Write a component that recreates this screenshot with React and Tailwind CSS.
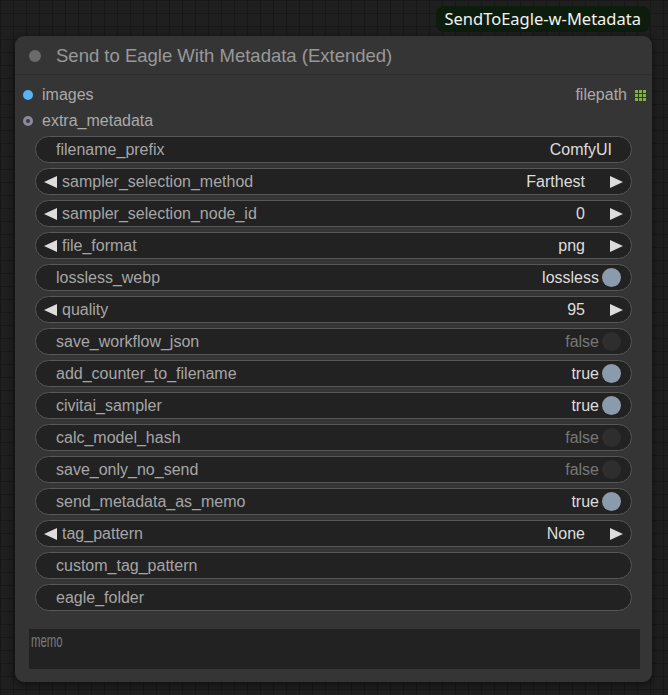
const widgets = [
  { name: 'filename_prefix', kind: 'text', value: 'ComfyUI' },
  { name: 'sampler_selection_method', kind: 'combo', value: 'Farthest' },
  { name: 'sampler_selection_node_id', kind: 'combo', value: '0' },
  { name: 'file_format', kind: 'combo', value: 'png' },
  { name: 'lossless_webp', kind: 'toggle', value: 'lossless', on: true },
  { name: 'quality', kind: 'combo', value: '95' },
  { name: 'save_workflow_json', kind: 'toggle', value: 'false', on: false },
  { name: 'add_counter_to_filename', kind: 'toggle', value: 'true', on: true },
  { name: 'civitai_sampler', kind: 'toggle', value: 'true', on: true },
  { name: 'calc_model_hash', kind: 'toggle', value: 'false', on: false },
  { name: 'save_only_no_send', kind: 'toggle', value: 'false', on: false },
  { name: 'send_metadata_as_memo', kind: 'toggle', value: 'true', on: true },
  { name: 'tag_pattern', kind: 'combo', value: 'None' },
  { name: 'custom_tag_pattern', kind: 'text', value: '' },
  { name: 'eagle_folder', kind: 'text', value: '' },
];

function Arrow({ dir }) {
  return (
    <svg width="13" height="12" viewBox="0 0 13 12" className="shrink-0">
      {dir === 'left'
        ? <polygon points="13,0 13,12 0,6" fill="#dddddd" />
        : <polygon points="0,0 0,12 13,6" fill="#dddddd" />}
    </svg>
  );
}

function WidgetRow({ w }) {
  if (w.kind === 'combo') {
    return (
      <div className="flex h-[27px] items-center rounded-full border border-[#575757] bg-[#222222] pl-[8px] pr-[8px]">
        <Arrow dir="left" />
        <span className="ml-[5px] text-[#a6a6a6]">{w.name}</span>
        <span className="ml-auto mr-[25px] text-[#dddddd]">{w.value}</span>
        <Arrow dir="right" />
      </div>
    );
  }
  if (w.kind === 'toggle') {
    return (
      <div className="flex h-[27px] items-center rounded-full border border-[#575757] bg-[#222222] pl-[20px] pr-[10px]">
        <span className="text-[#a6a6a6]">{w.name}</span>
        <span className={w.on ? 'ml-auto mr-[3px] text-[#dddddd]' : 'ml-auto mr-[3px] text-[#777777]'}>{w.value}</span>
        <span className={w.on ? 'h-[19px] w-[19px] rounded-full bg-[#8a9bad]' : 'h-[19px] w-[19px] rounded-full bg-[#2e2e2e]'} />
      </div>
    );
  }
  return (
    <div className="flex h-[27px] items-center rounded-full border border-[#575757] bg-[#222222] pl-[20px] pr-[19px]">
      <span className="text-[#a6a6a6]">{w.name}</span>
      <span className="ml-auto text-[#dddddd]">{w.value}</span>
    </div>
  );
}

export default function App() {
  return (
    <div className="flex h-[695px] w-[668px] flex-col overflow-hidden bg-[#1f1f1f] bg-[linear-gradient(to_right,#181818_1px,transparent_1px),linear-gradient(to_bottom,#181818_1px,transparent_1px)] bg-[size:13px_13px] pt-[6px] font-['Liberation_Sans',Arial,sans-serif] text-[16px]">
      <div className="ml-auto mr-[18px] flex h-[26px] items-center rounded-[8px] bg-[#0c1d0e] pl-[8px] pr-[9px] font-['Noto_Sans',sans-serif] text-[16.5px] text-[#f2f2f2]">
        SendToEagle-w-Metadata
      </div>

      <div className="ml-[15px] mt-[4px] flex h-[646px] w-[637px] flex-col rounded-[9px] bg-[#353535] shadow-[0_2px_8px_rgba(0,0,0,0.6)]">
        <div className="flex h-[39px] items-center border-b border-[#2c2c2c] pl-[14px] pt-[1px] text-[18.5px] text-[#999999]">
          <span className="h-[12px] w-[12px] rounded-full bg-[#6b6b6b]" />
          <span className="ml-[15px]">Send to Eagle With Metadata (Extended)</span>
        </div>

        <div className="flex flex-col pt-[7px]">
          <div className="flex h-[26px] items-center pl-[8px] pr-[6px]">
            <span className="h-[10px] w-[10px] rounded-full bg-[#58b4f5]" />
            <span className="ml-[9px] text-[#aaaaaa]">images</span>
            <span className="ml-auto text-[#aaaaaa]">filepath</span>
            <svg width="11" height="11" viewBox="0 0 11 11" className="ml-[8px]">
              {[0, 4, 8].map((y) =>
                [0, 4, 8].map((x) => <rect key={x + '-' + y} x={x} y={y} width="3" height="3" fill="#7cb82f" />)
              )}
            </svg>
          </div>
          <div className="flex h-[26px] items-center pl-[8px]">
            <span className="flex h-[10px] w-[10px] items-center justify-center rounded-full bg-[#8a8a9a]">
              <span className="h-[4px] w-[4px] rounded-full bg-[#3a3a44]" />
            </span>
            <span className="ml-[9px] text-[#aaaaaa]">extra_metadata</span>
          </div>
        </div>

        <div className="ml-[20px] mt-[2px] flex w-[597px] flex-col gap-[5px]">
          {widgets.map((w) => (
            <WidgetRow key={w.name} w={w} />
          ))}
        </div>

        <div className="ml-[14px] mt-[18px] h-[40px] w-[611px] overflow-hidden bg-[#222222] pl-[2px]">
          <span className="inline-block origin-left scale-x-[0.6] text-[19px] leading-[24px] text-[#7a7a7a]">memo</span>
        </div>
      </div>
    </div>
  );
}
